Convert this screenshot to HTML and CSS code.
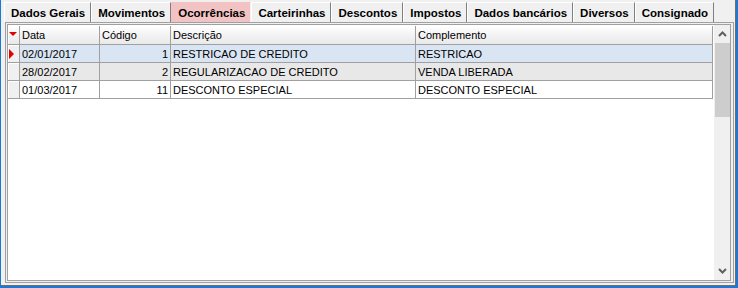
FILE: index.html
```html
<!DOCTYPE html>
<html>
	<head>
		<meta charset="utf-8">
		<title>Ocorrências</title>
		<link rel="stylesheet" href="styles.css">
	</head>
	<body>
		<div id="janela">
			<ul id="abas">
				<li>Dados Gerais</li>
				<li>Movimentos</li>
				<li class="ativa">Ocorrências</li>
				<li>Carteirinhas</li>
				<li>Descontos</li>
				<li>Impostos</li>
				<li>Dados bancários</li>
				<li>Diversos</li>
				<li>Consignado</li>
			</ul>
			<div id="folha">
				<div id="grade">
					<div id="corpo">
						<table id="tabela">
							<colgroup>
								<col class="c-ind"><col class="c-data"><col class="c-cod"><col class="c-desc"><col class="c-comp">
							</colgroup>
							<thead>
								<tr>
									<th class="ind"><span class="seta-baixo"></span></th>
									<th>Data</th>
									<th>Código</th>
									<th>Descrição</th>
									<th>Complemento</th>
								</tr>
							</thead>
							<tbody>
								<tr class="sel">
									<td class="ind"><span class="seta-dir"></span></td>
									<td>02/01/2017</td>
									<td class="num">1</td>
									<td>RESTRICAO DE CREDITO</td>
									<td>RESTRICAO</td>
								</tr>
								<tr class="cinza">
									<td class="ind"></td>
									<td>28/02/2017</td>
									<td class="num">2</td>
									<td>REGULARIZACAO DE CREDITO</td>
									<td>VENDA LIBERADA</td>
								</tr>
								<tr>
									<td class="ind"></td>
									<td>01/03/2017</td>
									<td class="num">11</td>
									<td>DESCONTO ESPECIAL</td>
									<td>DESCONTO ESPECIAL</td>
								</tr>
							</tbody>
						</table>
					</div>
					<div id="rolagem">
						<div class="botao">
							<svg width="9" height="6" viewBox="0 0 9 6"><path d="M1 5 L4.5 1.5 L8 5" fill="none" stroke="#606060" stroke-width="2"/></svg>
						</div>
						<div class="polegar"></div>
						<div class="trilho"></div>
						<div class="botao">
							<svg width="9" height="6" viewBox="0 0 9 6"><path d="M1 1 L4.5 4.5 L8 1" fill="none" stroke="#606060" stroke-width="2"/></svg>
						</div>
					</div>
				</div>
			</div>
		</div>
	</body>
</html>
```

FILE: styles.css
```css
*{
	padding: 0;
	margin: 0;
	box-sizing: border-box;
}
body{
	font-family: "Liberation Sans", Arial, sans-serif;
	font-size: 11px;
	color: #000;
}
#janela{
	width: 738px;
	height: 288px;
	background-color: #f0f0f0;
	border-left: 1px solid #1979d6;
	border-right: 2px solid #1979d6;
	border-bottom: 2px solid #1979d6;
	box-shadow: inset -1px -1px 0 #6d6d6d;
	display: flex;
	flex-direction: column;
}
	#abas{
		list-style-type: none;
		display: flex;
		height: 22px;
		padding: 2px 0 0 3px;
	}
	#abas li{
		font-weight: bold;
		font-size: 11.5px;
		height: 20px;
		line-height: 20px;
		padding: 0 5px 0 6px;
		border-left: 1px solid #ffffff;
		border-top: 1px solid #ffffff;
		border-right: 1px solid #808080;
		white-space: nowrap;
	}
	#abas li.ativa{
		background-color: #f3c3c3;
		border-color: #f3c3c3;
		border-right-color: #f0f0f0;
	}
	#folha{
		flex: 1;
		margin: 0 2px 3px 4px;
		border: 1px solid #a0a0a0;
		padding: 1px 2px 1px 1px;
		display: flex;
	}
	#grade{
		flex: 1;
		border: 1px solid #a0a0a0;
		background-color: #ffffff;
		display: flex;
	}
	#corpo{
		flex: 1;
		padding-top: 1px;
		overflow: hidden;
	}
	#tabela{
		table-layout: fixed;
		border-collapse: separate;
		border-spacing: 0;
		width: 705px;
	}
	.c-ind{ width: 12px; }
	.c-data{ width: 80px; }
	.c-cod{ width: 71px; }
	.c-desc{ width: 245px; }
	.c-comp{ width: 297px; }
	#tabela th{
		font-weight: normal;
		text-align: left;
		height: 19px;
		padding: 0 2px;
		background: linear-gradient(#ffffff, #f3f3f3 50%, #e9e9e9);
		border-right: 1px solid #a0a0a0;
		border-bottom: 1px solid #a0a0a0;
		white-space: nowrap;
	}
	#tabela td{
		height: 18px;
		padding: 0 2px;
		border-right: 1px solid #a0a0a0;
		border-bottom: 1px solid #a0a0a0;
		white-space: nowrap;
		overflow: hidden;
	}
	#tabela td.num{
		text-align: right;
	}
	#tabela .ind{
		padding: 0;
		background-color: #f0f0f0;
		box-shadow: inset 1px 1px 0 #ffffff;
		position: relative;
	}
	#tabela tr.sel td{
		background-color: #d9e5f2;
	}
	#tabela tr.cinza td{
		background-color: #e8e8e8;
	}
	#tabela tr td.ind{
		background-color: #f0f0f0;
	}
	.seta-baixo{
		position: absolute;
		left: 1px;
		top: 6px;
		border-left: 4px solid transparent;
		border-right: 4px solid transparent;
		border-top: 4px solid #e00000;
	}
	.seta-dir{
		position: absolute;
		left: 1px;
		top: 4px;
		border-top: 5px solid transparent;
		border-bottom: 5px solid transparent;
		border-left: 5px solid #e00000;
	}
	#rolagem{
		width: 16px;
		background-color: #f0f0f0;
		display: flex;
		flex-direction: column;
	}
	#rolagem .botao{
		height: 18px;
		display: flex;
		align-items: center;
		justify-content: center;
	}
	#rolagem .polegar{
		height: 74px;
		background-color: #cdcdcd;
		margin: 0 0 0 1px;
	}
	#rolagem .trilho{
		flex: 1;
	}
```
